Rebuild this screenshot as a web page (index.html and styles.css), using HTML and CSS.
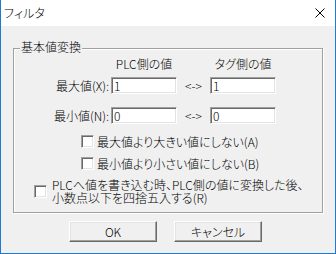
FILE: index.html
```html
<!DOCTYPE html>
<html lang="ja">
<head>
<meta charset="utf-8">
<title>フィルタ</title>
<link rel="stylesheet" href="styles.css">
</head>
<body>
<div class="window">
  <div class="titlebar">
    <span class="title">フィルタ</span>
    <svg class="close" width="10" height="10" viewBox="0 0 10 10"><path d="M0.5 0.5 L9.5 9.5 M9.5 0.5 L0.5 9.5" stroke="#000" stroke-width="1" fill="none"/></svg>
  </div>
  <div class="content">
    <div class="group">
      <div class="group-title">基本値変換</div>
      <div class="grid">
        <span></span><span class="head">PLC側の値</span><span></span><span class="head">タグ側の値</span>
        <label class="lbl">最大値(X):</label><input class="edit" type="text" value="1"><span class="arrow">&lt;-&gt;</span><input class="edit" type="text" value="1">
        <label class="lbl">最小値(N):</label><input class="edit" type="text" value="0"><span class="arrow">&lt;-&gt;</span><input class="edit" type="text" value="0">
      </div>
      <div class="check-row first"><span class="check"></span><span class="ctext">最大値より大きい値にしない(A)</span></div>
      <div class="check-row second"><span class="check"></span><span class="ctext">最小値より小さい値にしない(B)</span></div>
      <div class="check-row wide"><span class="check"></span><span class="ctext multi">PLCへ値を書き込む時、PLC側の値に変換した後、<br>小数点以下を四捨五入する(R)</span></div>
    </div>
    <div class="buttons">
      <button class="btn" type="button">OK</button>
      <button class="btn" type="button">キャンセル</button>
    </div>
  </div>
</div>
</body>
</html>
```
FILE: styles.css
```css
html, body {
  margin: 0;
  padding: 0;
  background: #f0f0f0;
}
body {
  font-family: "Noto Sans CJK JP", "Noto Sans", sans-serif;
  font-size: 12px;
  font-weight: 300;
  color: #000;
  font-feature-settings: "palt";
}
.window {
  width: 336px;
  height: 254px;
  box-sizing: border-box;
  border: 1px solid #1f7ad1;
  border-top: none;
  background: #f0f0f0;
  display: flex;
  flex-direction: column;
}
.titlebar {
  height: 26px;
  flex: none;
  background: #fff;
  display: flex;
  align-items: center;
  justify-content: space-between;
  padding-left: 3px;
}
.title {
  font-size: 12px;
  line-height: 14px;
  color: #000;
}
.close {
  display: block;
  margin-right: 10px;
}
.content {
  display: flex;
  flex-direction: column;
}
.group {
  margin: 22px 12px 0 12px;
  border: 1px solid #a0a0a0;
  box-shadow: inset 1px 1px 0 #fff, 1px 1px 0 #fff;
  padding-bottom: 8px;
  display: flex;
  flex-direction: column;
}
.group-title {
  width: fit-content;
  margin-top: -9px;
  margin-left: 6px;
  padding: 0 1px;
  line-height: 14px;
  background: #f0f0f0;
}
.grid {
  margin-top: 3px;
  display: grid;
  grid-template-columns: 97px 66px 33px 66px;
  grid-template-rows: 20px 30px 17px;
  align-items: start;
}
.head {
  line-height: 14px;
  text-align: center;
  white-space: nowrap;
}
.lbl {
  line-height: 17px;
  text-align: right;
  padding-right: 2px;
  white-space: nowrap;
}
.arrow {
  line-height: 17px;
  text-align: center;
}
.edit {
  appearance: none;
  -webkit-appearance: none;
  box-sizing: border-box;
  width: 66px;
  height: 17px;
  margin: 0;
  padding: 0 0 0 2px;
  border: 1px solid;
  border-color: #a0a0a0 #fff #fff #a0a0a0;
  box-shadow: inset 1px 1px 0 #696969, inset -1px -1px 0 #e3e3e3;
  background: #fff;
  font: inherit;
  font-size: 12px;
  line-height: 15px;
  color: #000;
  outline: none;
}
.check-row {
  display: flex;
  align-items: center;
  line-height: 13px;
  white-space: nowrap;
}
.check-row.first {
  margin-top: 11px;
  margin-left: 67px;
}
.check-row.second {
  margin-top: 9px;
  margin-left: 67px;
}
.check-row.wide {
  margin-top: 8px;
  margin-left: 20px;
}
.check {
  flex: none;
  box-sizing: border-box;
  width: 13px;
  height: 13px;
  border: 1px solid;
  border-color: #a0a0a0 #fff #fff #a0a0a0;
  box-shadow: inset 1px 1px 0 #696969, inset -1px -1px 0 #e3e3e3;
  background: #fff;
}
.ctext {
  margin-left: 3px;
}
.wide .ctext {
  margin-left: 5px;
}
.buttons {
  display: flex;
  gap: 17px;
  margin-top: 8px;
  padding-left: 68px;
}
.btn {
  appearance: none;
  -webkit-appearance: none;
  box-sizing: border-box;
  width: 88px;
  height: 21px;
  margin: 0;
  padding: 0;
  border: 1px solid;
  border-color: #fff #696969 #696969 #fff;
  box-shadow: inset -1px -1px 0 #a0a0a0, inset 1px 1px 0 #e3e3e3;
  background: #f0f0f0;
  font: inherit;
  font-size: 12px;
  line-height: 17px;
  color: #000;
}
```
